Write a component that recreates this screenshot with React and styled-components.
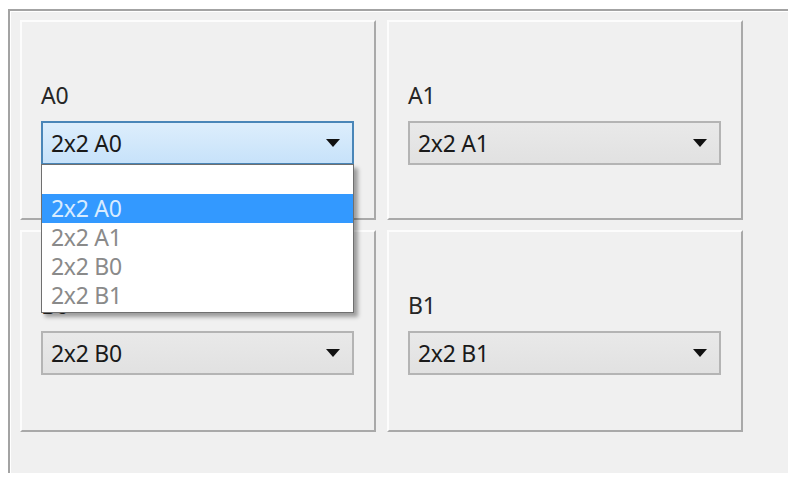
import styled, { createGlobalStyle } from 'styled-components';

const GlobalStyle = createGlobalStyle`
  body {
    margin: 0;
    background: #ffffff;
    font-family: "Noto Sans", "Open Sans", sans-serif;
  }
`

const Frame = styled.div`
  margin: 9px 0 0 8px;
  width: 780px;
  height: 464px;
  box-sizing: border-box;
  background: #f0f0f0;
  border-top: 2px solid #a3a3a3;
  border-left: 2px solid #a3a3a3;
  box-shadow: inset 1px 1px 0 #ffffff;
  padding: 9px 0 0 10px;
`

const Grid = styled.div`
  display: grid;
  grid-template-columns: 356px 356px;
  grid-template-rows: 200px 202px;
  column-gap: 11px;
  row-gap: 10px;
`

const Panel = styled.div`
  box-sizing: border-box;
  border: 2px solid;
  border-color: #fcfcfc #a9a9a9 #a9a9a9 #fcfcfc;
  padding: 59px 20px 0 19px;
  display: flex;
  flex-direction: column;
  position: relative;
  z-index: ${(p) => (p.$open ? 2 : 1)};
`

const Label = styled.div`
  font-size: 23px;
  line-height: 28px;
  color: #262626;
  margin-bottom: 12px;
  letter-spacing: -0.3px;
`

const ComboWrap = styled.div`
  position: relative;
`

const Combo = styled.div`
  box-sizing: border-box;
  height: 44px;
  width: 313px;
  display: flex;
  align-items: center;
  justify-content: space-between;
  padding: 0 12px 0 8px;
  font-size: 23px;
  letter-spacing: -0.3px;
  color: #1a1a1a;
  border: 2px solid ${(p) => (p.$focused ? '#4a86b8' : '#b4b4b4')};
  background: ${(p) =>
    p.$focused
      ? 'linear-gradient(#ddeefc, #c7e2fa)'
      : 'linear-gradient(#e9e9e9, #e1e1e1)'};
`

const Arrow = styled.span`
  width: 0;
  height: 0;
  border-left: 7px solid transparent;
  border-right: 7px solid transparent;
  border-top: 8px solid #111111;
`

// popup list of the open combo, drawn over the panels below it
const List = styled.div`
  position: absolute;
  top: 43px;
  left: 0;
  width: 313px;
  box-sizing: border-box;
  padding-bottom: 2px;
  background: #ffffff;
  border: 1px solid #6f6f6f;
  box-shadow: 4px 4px 4px rgba(0, 0, 0, 0.35);
  z-index: 5;
`

const Item = styled.div`
  height: 29px;
  line-height: 29px;
  padding-left: 9px;
  font-size: 23px;
  letter-spacing: -0.3px;
  color: ${(p) => (p.$selected ? '#d8ecff' : '#8a8a8a')};
  background: ${(p) => (p.$selected ? '#3399ff' : 'transparent')};
`

const options = ['2x2 A0', '2x2 A1', '2x2 B0', '2x2 B1']

const cells = [
  { label: 'A0', value: '2x2 A0', open: true },
  { label: 'A1', value: '2x2 A1' },
  { label: 'B0', value: '2x2 B0' },
  { label: 'B1', value: '2x2 B1' },
]

function App() {
  return (
    <>
      <GlobalStyle />
      <Frame>
        <Grid>
          {cells.map((c) => (
            <Panel key={c.label} $open={c.open}>
              <Label>{c.label}</Label>
              <ComboWrap>
                <Combo $focused={c.open}>
                  <span>{c.value}</span>
                  <Arrow />
                </Combo>
                {c.open && (
                  <List>
                    <Item />
                    {options.map((o) => (
                      <Item key={o} $selected={o === c.value}>{o}</Item>
                    ))}
                  </List>
                )}
              </ComboWrap>
            </Panel>
          ))}
        </Grid>
      </Frame>
    </>
  )
}

export default App
